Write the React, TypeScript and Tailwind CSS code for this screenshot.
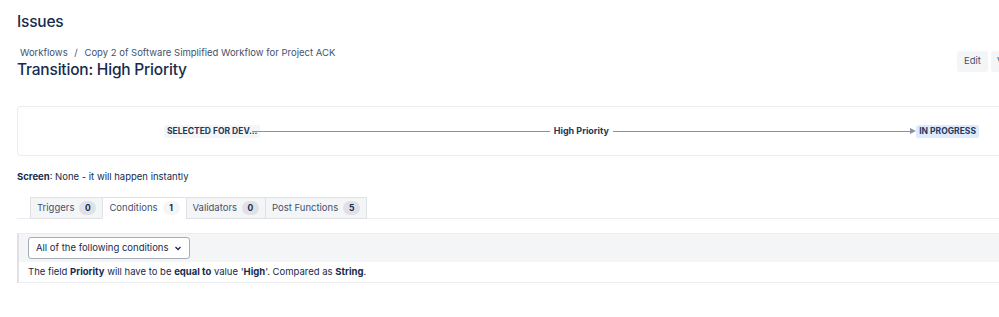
import React from "react";

type Tab = { label: string; count: number; active?: boolean };

const tabs: Tab[] = [
  { label: "Triggers", count: 0 },
  { label: "Conditions", count: 1, active: true },
  { label: "Validators", count: 0 },
  { label: "Post Functions", count: 5 },
];

const Lozenge: React.FC<{ text: string; blue?: boolean }> = ({ text, blue }) => (
  <span
    className={`px-[3px] h-[13px] leading-[13px] rounded-[2px] text-[8.5px] font-bold uppercase whitespace-nowrap text-[#253858] ${
      blue ? "bg-[#deebff]" : "bg-[#f4f5f7]"
    }`}
  >
    {text}
  </span>
);

export default function App() {
  return (
    <div
      className="w-[999px] h-[317px] overflow-hidden bg-white text-[#172b4d]"
      style={{ fontFamily: "Inter, 'Noto Sans', sans-serif" }}
    >
      <div className="w-[1025px] pl-[17px] pt-[12px]">
        {/* ページタイトル */}
        <h1 className="text-[15.5px] font-medium leading-[20px] tracking-[-0.2px]">Issues</h1>

        {/* パンくず + 操作ボタン */}
        <div className="flex items-start justify-between mt-[14px] pr-[4px]">
          <div>
            <div className="text-[9.5px] leading-[13px] text-[#42526e] pl-[3px]">
              Workflows <span className="mx-[4px]">/</span> Copy 2 of Software Simplified Workflow for Project ACK
            </div>
            <h2 className="text-[15.5px] leading-[20px] font-medium tracking-[-0.2px] mt-[1px]">Transition: High Priority</h2>
          </div>
          <div className="flex gap-[3px] mt-[5px]">
            <button className="h-[21px] w-[31px] rounded-[3px] bg-[#f4f5f7] text-[9.5px] text-[#42526e]">Edit</button>
            <button className="h-[21px] w-[30px] rounded-[3px] bg-[#f4f5f7] text-[9.5px] text-[#42526e] text-left pl-[6px]">View</button>
          </div>
        </div>

        {/* ワークフロー図 */}
        <div className="mt-[26px] h-[50px] border border-[#ebecf0] rounded-[3px] flex items-center pl-[146px] pr-[45px]">
          <div className="flex items-center w-full">
            <Lozenge text="Selected for dev..." />
            <div className="flex-1 h-px bg-[#8993a4] -ml-[8px]" />
            <span className="px-[4px] text-[9px] font-bold text-[#253858]">High Priority</span>
            <div className="flex-1 h-px bg-[#8993a4]" />
            <svg width="6" height="6" viewBox="0 0 6 6" className="shrink-0">
              <path d="M0 0 L6 3 L0 6 Z" fill="#8993a4" />
            </svg>
            <Lozenge text="In progress" blue />
          </div>
        </div>

        <div className="mt-[14px] text-[9.5px] leading-[13px]">
          <span className="font-bold">Screen</span>: None - it will happen instantly
        </div>

        {/* タブ */}
        <div className="mt-[14px] flex pl-[13px] border-b border-[#ebecf0]">
          {tabs.map((t) => (
            <div
              key={t.label}
              className={`h-[22px] -mb-px flex items-center gap-[5px] px-[6px] border border-[#dfe1e6] -ml-px first:ml-0 text-[9.5px] ${
                t.active ? "bg-white border-b-white" : "bg-[#f4f5f7]"
              }`}
            >
              <span className="text-[#42526e]">{t.label}</span>
              <span
                className={`min-w-[17px] h-[14px] px-[5px] rounded-full text-[8.5px] font-bold flex items-center justify-center ${
                  t.active ? "bg-[#f4f5f7]" : "bg-[#dfe1e6]"
                }`}
              >
                {t.count}
              </span>
            </div>
          ))}
        </div>

        {/* 条件 */}
        <div className="mt-[14px] border border-[#ebecf0] border-l-[2px] border-l-[#dfe1e6]">
          <div className="bg-[#f4f5f7] px-[9px] py-[3px]">
            <div className="w-[162px] h-[22px] bg-white border border-[#a5adba] rounded-[3px] flex items-center justify-between px-[7px] text-[9.5px] whitespace-nowrap">
              <span>All of the following conditions</span>
              <svg width="8" height="8" viewBox="0 0 8 8">
                <path d="M1.5 3 L4 5.5 L6.5 3" fill="none" stroke="#172b4d" strokeWidth="1.3" />
              </svg>
            </div>
          </div>
          <div className="h-[20px] flex items-center px-[9px] text-[9.5px]">
            <span>
              The field <b>Priority</b> will have to be <b>equal to</b> value '<b>High</b>'. Compared as <b>String</b>.
            </span>
          </div>
        </div>
      </div>
    </div>
  );
}
